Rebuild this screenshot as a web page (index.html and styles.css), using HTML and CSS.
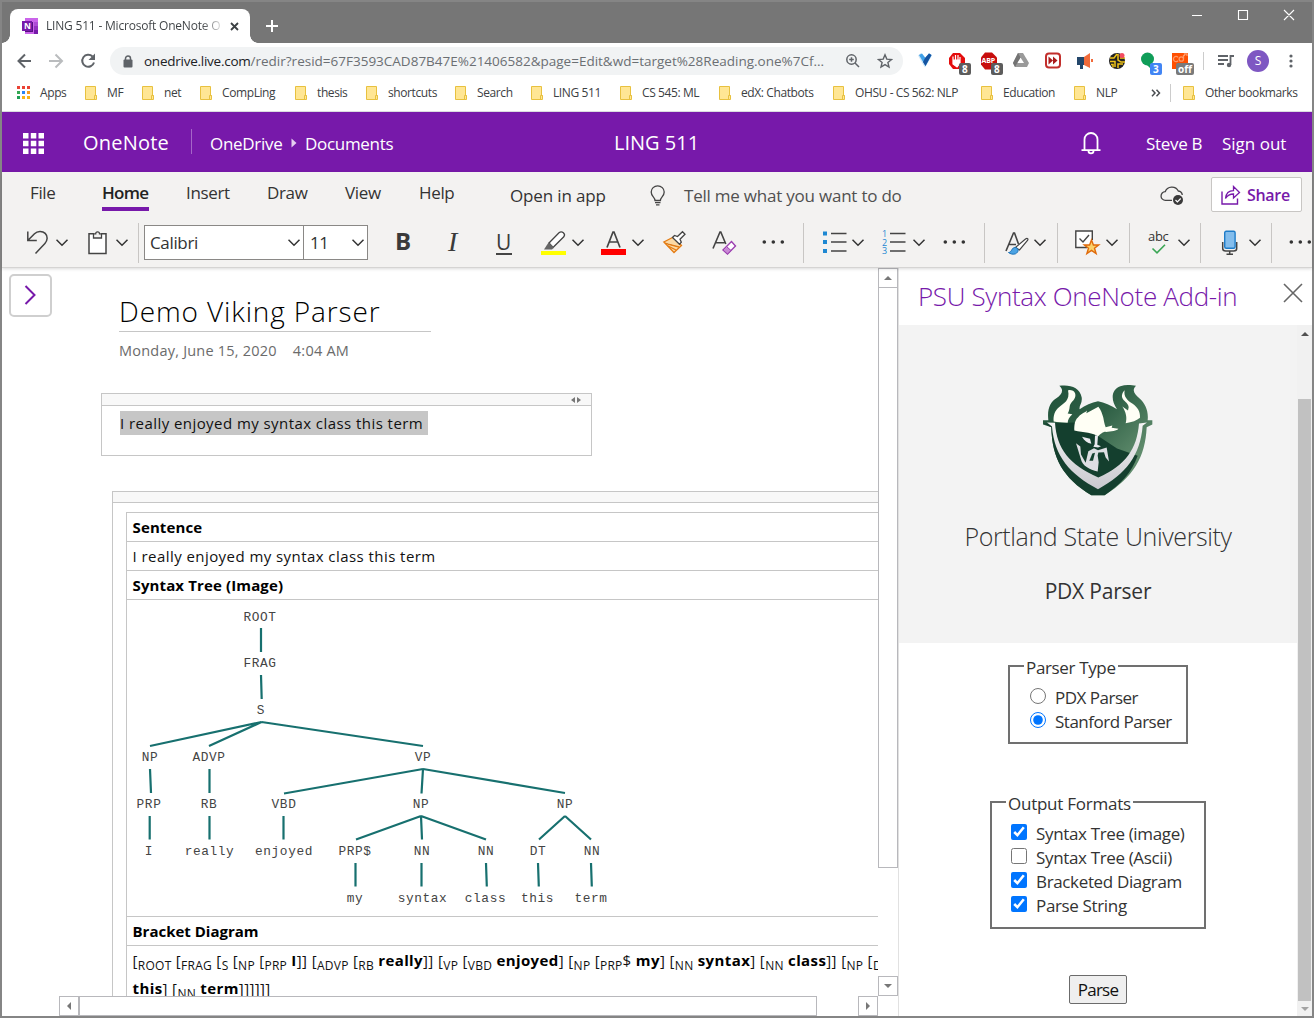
FILE: index.html
```html
<!DOCTYPE html>
<html lang="en">
<head>
<meta charset="utf-8">
<title>LING 511 - Microsoft OneNote Online</title>
<link rel="stylesheet" href="styles.css">
</head>
<body>
<svg class="defs" aria-hidden="true">
  <symbol id="folder" viewBox="0 0 12 14"><path d="M.5.5h10v9h1v4H.5z" fill="#ffe694" stroke="#e8c13f"/><path d="M9.500 13v-3.500h2" fill="none" stroke="#e8c13f"/></symbol>
  <symbol id="chev" viewBox="0 0 13 27"><path d="M.5 10.800l5.500 5.500 5.500-5.500" fill="none" stroke="#333" stroke-width="1.500"/></symbol>
  <symbol id="dots" viewBox="0 0 23 27"><g fill="#333"><circle cx="1.800" cy="13" r="1.800"/><circle cx="10.800" cy="13" r="1.800"/><circle cx="19.800" cy="13" r="1.800"/></g></symbol>
</svg>
<div class="window">
  <div class="tabstrip">
    <div class="tab">
      <svg width="16" height="16" viewBox="0 0 16 16"><path d="M3 0h13v16H3z" fill="#ca64ea"/><path d="M12 4h4v4h-4z" fill="#ae4bd5"/><path d="M12 8h4v4h-4z" fill="#9332bf"/><path d="M12 12h4v4h-4z" fill="#7719aa"/><path d="M3 4h8v10H3z" fill="#57107f"/><path d="M0 3h10v10H0z" fill="#7719aa"/><text x="2" y="11" class="logo-n">N</text></svg>
      <span class="tab-title">LING 511 - Microsoft OneNote O</span>
      <svg width="9" height="9" viewBox="0 0 9 9"><path d="M1 1l7 7M8 1l-7 7" stroke="#3c4043" stroke-width="1.800"/></svg>
    </div>
    <svg class="newtab" width="12" height="12" viewBox="0 0 12 12"><path d="M6 0v12M0 6h12" stroke="#fff" stroke-width="2"/></svg>
    <svg class="winctl" width="104" height="12" viewBox="0 0 104 12"><path d="M0 6.500h10M46.500 1.500h9v9h-9zM92 1l10 10M102 1l-10 10" fill="none" stroke="#fff" stroke-width="1.100"/></svg>
  </div>

  <div class="addressbar">
    <svg class="nav" width="84" height="18" viewBox="0 0 84 18"><path d="M14 9H2M8 2.500L1.500 9 8 15.500" fill="none" stroke="#5f6368" stroke-width="2"/><path d="M32 9h12M38.500 2.500L45 9l-6.500 6.500" fill="none" stroke="#babcbe" stroke-width="2"/><path d="M75.500 4.500A6 6 0 1 0 77 10.500" fill="none" stroke="#5f6368" stroke-width="2"/><path d="M78 1.500v6.500h-6.500z" fill="#5f6368"/></svg>
    <div class="omnibox">
      <svg width="10" height="13" viewBox="0 0 10 13"><path d="M2.500 5V3.500a2.500 2.500 0 0 1 5 0V5" fill="none" stroke="#5f6368" stroke-width="1.500"/><rect x=".5" y="4.500" width="9" height="8" rx="1" fill="#5f6368"/></svg>
      <span class="url"><b>onedrive.live.com</b>/redir?resid=67F3593CAD87B47E%21406582&amp;page=Edit&amp;wd=target%28Reading.one%7Cf...</span>
      <svg width="14" height="14" viewBox="0 0 14 14"><circle cx="5.500" cy="5.500" r="4.700" fill="none" stroke="#5f6368" stroke-width="1.500"/><path d="M9 9l4 4M3.200 5.500h4.600M5.500 3.200v4.600" stroke="#5f6368" stroke-width="1.500"/></svg>
      <svg width="16" height="16" viewBox="0 0 16 16"><path d="M8 1.800l1.800 4.300 4.700.4-3.600 3 1.100 4.600L8 11.600l-4 2.500 1.100-4.600-3.600-3 4.700-.4z" fill="none" stroke="#5f6368" stroke-width="1.400"/></svg>
    </div>
    <div class="exts">
      <svg viewBox="0 0 32 28"><path d="M9 8.500l3-2.500 4 5 4-5 3 2.500-5 9-2 3-2-3z" fill="#cfe6f7"/><path d="M10 8l3-1.500 3.500 4.500L20 6.500 22.500 8l-6 11z" fill="#3fa0e8"/><path d="M16 11l4-4.500L22.500 8l-6 11-2.500-4z" fill="#1553a0"/></svg>
      <svg viewBox="0 0 32 28"><path d="M12 6h7l5 5v6l-5 5h-7l-4-5v-6z" fill="#e40d0d"/><path d="M12 14V9.500M14.500 13V8M17 13V8M19 14v-4M12 13h7v3l-3 4-4-3z" stroke="#fff" stroke-width="1.200" fill="#fff"/><rect x="18" y="16" width="12" height="12" rx="2" fill="#5c5c5c"/><text x="21" y="26" class="badge">8</text></svg>
      <svg viewBox="0 0 32 28"><path d="M12 5.500h7l5 5v7l-5 5h-7l-4-5v-7z" fill="#c70d0d"/><text x="8.500" y="16" class="badge abp">ABP</text><rect x="18" y="16" width="12" height="12" rx="2" fill="#5c5c5c"/><text x="21" y="26" class="badge">8</text></svg>
      <svg viewBox="0 0 32 28"><path d="M13 6h5l6 10-2 4H10l-2-4z" fill="#9a9a9a"/><path d="M15.500 10.500l3.500 5.500h-7z" fill="#fff"/><path d="M8 16l5-10 2.500 4.500L10 20z" fill="#737373"/></svg>
      <svg viewBox="0 0 32 28"><rect x="9" y="6.500" width="14" height="14" rx="3" fill="#fff" stroke="#c22f2c" stroke-width="2"/><path d="M11.500 9.500l4.500 4-4.500 4zM16 9.500l4.500 4-4.500 4z" fill="#a91b1b"/></svg>
      <svg viewBox="0 0 32 28"><path d="M8 10h7v8h-1v4h-3v-4H8z" fill="#24476b"/><path d="M15 10l6-4v15l-6-3z" fill="#f26b3a"/><path d="M22 12h2v3h-2z" fill="#f26b3a"/></svg>
      <svg viewBox="0 0 32 28"><circle cx="16" cy="14" r="8" fill="#222"/><path d="M9 11h4l3-4M9 14.500h5V20M17 7v6l3 2h4M17 21v-4h5M10 17.500h2v3M19 11h5" stroke="#f0c419" stroke-width="1.500" fill="none"/><circle cx="21" cy="8.500" r="2.500" fill="#f44b61"/></svg>
      <svg viewBox="0 0 32 28"><circle cx="14.500" cy="12" r="6.500" fill="#0f9d58"/><path d="M14 18h4v4z" fill="#0f9d58"/><rect x="17" y="16" width="12" height="12" rx="2" fill="#4285f4"/><text x="20" y="26" class="badge">3</text></svg>
      <svg viewBox="0 0 32 28"><path d="M7 6h16v16H7z" fill="#ff4f00"/><g fill="none" stroke="#ff9a68" stroke-width="1.300"><path d="M13 10.300a2.600 2.600 0 1 0 0 3.400M18.500 12a2.200 2.200 0 1 0-4.400 0 2.200 2.200 0 0 0 4.400 0V8M19.500 9V7h2.500v2"/></g><rect x="11" y="16" width="18" height="12" rx="2" fill="#7a7a7a"/><text x="13" y="26" class="badge">off</text></svg>
    </div>
    <i class="vline"></i>
    <svg width="16" height="13" viewBox="0 0 16 13"><path d="M0 1h10M0 5h10M0 9h6M16 1h-3.500v9" fill="none" stroke="#5f6368" stroke-width="1.800"/><circle cx="11" cy="10" r="2.200" fill="#5f6368"/></svg>
    <span class="avatar">S</span>
    <svg width="4" height="14" viewBox="0 0 4 14"><g fill="#5f6368"><circle cx="2" cy="2" r="1.600"/><circle cx="2" cy="7" r="1.600"/><circle cx="2" cy="12" r="1.600"/></g></svg>
  </div>

  <div class="bookmarks">
    <span class="apps"><svg width="14" height="14" viewBox="0 0 14 14"><path d="M0 0h3v3H0zM5 0h3v3H5zM10 0h3v3h-3z" fill="#ea4335"/><path d="M0 5h3v3H0z" fill="#34a853"/><path d="M5 5h3v3H5z" fill="#2a85f4"/><path d="M10 5h3v3h-3z" fill="#f59a20"/><path d="M0 10h3v3H0z" fill="#1f9d55"/><path d="M5 10h3v3H5zM10 10h3v3h-3z" fill="#f9b316"/></svg>Apps</span>
    <span><svg><use href="#folder"/></svg>MF</span>
    <span><svg><use href="#folder"/></svg>net</span>
    <span><svg><use href="#folder"/></svg>CompLing</span>
    <span><svg><use href="#folder"/></svg>thesis</span>
    <span><svg><use href="#folder"/></svg>shortcuts</span>
    <span><svg><use href="#folder"/></svg>Search</span>
    <span><svg><use href="#folder"/></svg>LING 511</span>
    <span><svg><use href="#folder"/></svg>CS 545: ML</span>
    <span><svg><use href="#folder"/></svg>edX: Chatbots</span>
    <span><svg><use href="#folder"/></svg>OHSU - CS 562: NLP</span>
    <span><svg><use href="#folder"/></svg>Education</span>
    <span><svg><use href="#folder"/></svg>NLP</span>
    <span><svg class="more" viewBox="0 0 10 8"><path d="M1 .8L4 4 1 7.200M5.500.8l3 3.200-3 3.200" fill="none" stroke="#4a4d51" stroke-width="1.500"/></svg></span>
    <i class="vline"></i>
    <span><svg><use href="#folder"/></svg>Other bookmarks</span>
  </div>

  <header class="apphead">
    <svg width="21" height="21" viewBox="0 0 21 21"><path d="M0 0h5.500v5.500H0zM7.800 0h5.500v5.500H7.800zM15.500 0H21v5.500h-5.500zM0 7.800h5.500v5.500H0zM7.800 7.800h5.500v5.500H7.800zM15.500 7.800H21v5.500h-5.500zM0 15.500h5.500V21H0zM7.800 15.500h5.500V21H7.800zM15.500 15.500H21V21h-5.500z" fill="#fff"/></svg>
    <span class="brand">OneNote</span>
    <i class="divider"></i>
    <span class="crumb">OneDrive</span>
    <svg width="6" height="10" viewBox="0 0 6 10"><path d="M.5.500L5.500 5l-5 4.500z" fill="#e5cff0"/></svg>
    <span class="crumb">Documents</span>
    <span class="doc">LING 511</span>
    <svg width="20" height="24" viewBox="0 0 20 24"><path d="M3.500 19V8.500a6.500 6.500 0 0 1 13 0V19M.5 19.200h19M7.500 20a2.500 2.300 0 0 0 5 0" fill="none" stroke="#fff" stroke-width="1.800"/></svg>
    <span class="user">Steve B</span>
    <span class="user signout">Sign out</span>
  </header>

  <div class="ribbon">
    <nav class="menu">
      <span>File</span><span class="active">Home</span><span>Insert</span><span>Draw</span><span>View</span><span>Help</span>
      <span class="low">Open in app</span>
      <svg class="bulb" width="16" height="21" viewBox="0 0 16 21"><path d="M5 15.500c0-3.500-3.800-4-3.800-8.500a6.500 6.200 0 0 1 13 0c0 4.500-3.800 5-3.800 8.500zM5 17.600h5.500M6 19.800h3.500" fill="none" stroke="#444" stroke-width="1.300"/></svg>
      <span class="low tell">Tell me what you want to do</span>
      <svg class="cloud" width="25" height="21" viewBox="0 0 25 21"><path d="M12 15.300H5.500a4.300 4.300 0 0 1-.3-8.600A7 6.500 0 0 1 18.300 6a4.600 4.600 0 0 1 4 4" fill="none" stroke="#444" stroke-width="1.300"/><circle cx="18" cy="15" r="5" fill="#3a3a3a"/><path d="M15.500 15l1.900 1.900 3.300-3.400" stroke="#fff" fill="none" stroke-width="1.200"/></svg>
      <span class="share"><svg width="20" height="20" viewBox="0 0 20 20"><path d="M1 6.500V19h15.500v-5.500" fill="none" stroke="#7719aa" stroke-width="1.400"/><path d="M4.500 13.500c.5-5 3.500-7.800 8-7.800V1.500l6 6-6 5.500V9c-3.500 0-6 1.200-8 4.500z" fill="none" stroke="#7719aa" stroke-width="1.300"/></svg>Share</span>
    </nav>
    <div class="tools">
      <svg viewBox="0 0 24 27"><path d="M.8 2.500v9h9M1 11.300l6.500-6.600c3-3 8-3 10.700-.3 2.800 2.800 2.500 7-.3 10L8.500 24.500" fill="none" stroke="#444" stroke-width="1.500"/></svg>
      <svg class="chev"><use href="#chev"/></svg>
      <svg viewBox="0 0 24 27"><path d="M6 4.800H1v19.700h17V4.800h-5" fill="#fff" stroke="#444" stroke-width="1.500"/><path d="M5.500 9V4.800h2.200a1.900 1.900 0 0 1 3.800 0h2V9z" fill="#f3f2f1" stroke="#444" stroke-width="1.300"/></svg>
      <svg class="chev"><use href="#chev"/></svg>
      <i class="sep"></i>
      <div class="combo">Calibri<svg class="chev"><use href="#chev"/></svg></div>
      <div class="combo size">11<svg class="chev"><use href="#chev"/></svg></div>
      <span class="fmt bold">B</span>
      <span class="fmt ital">I</span>
      <span class="fmt under">U</span>
      <svg viewBox="0 0 26 27" class="w26"><path d="M0 22h25v4H0z" fill="#ff0"/><path d="M8 14L18 3.800c3-2.500 7 1.300 4.800 4L12 18.500z" fill="#fff" stroke="#444" stroke-width="1.300"/><path d="M3 20.500L7.500 13.500l5.500 5-2 2z" fill="#666"/></svg>
      <svg class="chev"><use href="#chev"/></svg>
      <svg viewBox="0 0 26 27" class="w26"><path d="M0 20h25v6H0z" fill="red"/><path d="M6 18.500L12 3h1l6 15.500M8.200 13h8.600" fill="none" stroke="#444" stroke-width="1.700"/></svg>
      <svg class="chev"><use href="#chev"/></svg>
      <svg viewBox="0 0 24 27"><path d="M.8 13l9.700-5 8 8.500L11 23.500z" fill="#fbd9a5" stroke="#e47b12" stroke-width="1.300"/><path d="M2 14l4 1.500 10 2.500M5 17l8 4" stroke="#e47b12" stroke-width="1.300"/><path d="M9.500 8.500l2-2 3 1 5-4.800 2.500 2.500-5 5 1.300 3-1.800 2z" fill="#fff" stroke="#444" stroke-width="1.300"/></svg>
      <svg viewBox="0 0 26 27" class="w26"><path d="M1 19.500L8 3h.8l5 12M3.500 13.800h9" fill="none" stroke="#444" stroke-width="1.600"/><path d="M11 21l8.500-8.500 4 4.500-8 8z" fill="#fff" stroke="#9b3fb0" stroke-width="1.400"/><path d="M11 21l3.500-3.500 4.500 4-3.500 3.500z" fill="#c98ad6" stroke="#9b3fb0"/></svg>
      <svg><use href="#dots"/></svg>
      <i class="sep"></i>
      <svg viewBox="0 0 24 27"><path d="M0 2.500h4v4H0zM0 11h4v4H0zM0 20h4v4H0z" fill="#1e88d2"/><path d="M8 4.500h15.500M8 13h15.500M8 22h15.500" stroke="#444" stroke-width="1.400"/></svg>
      <svg class="chev"><use href="#chev"/></svg>
      <svg viewBox="0 0 25 27" class="w25"><g class="nums"><text x="0" y="8">1</text><text x="0" y="16.500">2</text><text x="0" y="25">3</text></g><path d="M8 4.500h15.500M8 13h15.500M8 22h15.500" stroke="#444" stroke-width="1.400"/></svg>
      <svg class="chev"><use href="#chev"/></svg>
      <svg><use href="#dots"/></svg>
      <i class="sep"></i>
      <svg viewBox="0 0 24 27"><path d="M1 22L8.500 4h1l4 11M4 15.500h7" fill="none" stroke="#444" stroke-width="1.600"/><path d="M10.500 18.500L20.500 10c2-1.500 3 0 2 1.500L14.500 21z" fill="#fff" stroke="#444" stroke-width="1.200"/><path d="M3.500 23.500c3.500 0 3-5.500 7-5 3.500.8 3.500 4.500 0 6.300-2.500.9-5 .2-7-1.300z" fill="#4ba3e3" stroke="#1b72b8"/></svg>
      <svg class="chev"><use href="#chev"/></svg>
      <i class="sep"></i>
      <svg viewBox="0 0 25 27" class="w25"><path d="M12 18.500H.8V2h16.500v9" fill="#fff" stroke="#444" stroke-width="1.400"/><path d="M4.500 9.500l3.500 3.500 6-7" fill="none" stroke="#444" stroke-width="1.400"/><path d="M16.500 11l1.900 5h5.300l-4.200 3.300 1.600 5.300-4.600-3.200-4.600 3.200 1.600-5.300L9.300 16h5.300z" fill="#fbd26a" stroke="#e06a0a" stroke-width="1.400"/></svg>
      <svg class="chev"><use href="#chev"/></svg>
      <i class="sep"></i>
      <svg viewBox="0 0 24 27"><text x="0" y="12" class="abc">abc</text><path d="M4.500 19.500l4.500 4.300 8-8" fill="none" stroke="#3aa655" stroke-width="1.600"/></svg>
      <svg class="chev"><use href="#chev"/></svg>
      <i class="sep"></i>
      <svg viewBox="0 0 24 27"><path d="M2.700 13v6.500c0 2 1 2.500 3 2.500h8c2 0 3-.5 3-2.500V13M9.700 22v3M6.500 25.300h6.500" fill="none" stroke="#444" stroke-width="1.500"/><rect x="4.700" y="2.300" width="10.400" height="17" rx="1.500" fill="#83bdec" stroke="#1e7cc8" stroke-width="1.400"/></svg>
      <svg class="chev"><use href="#chev"/></svg>
      <i class="sep"></i>
      <svg><use href="#dots"/></svg>
    </div>
  </div>

  <main>
    <section class="editor">
      <div class="canvas">
        <div class="expand"><svg width="12" height="20" viewBox="0 0 12 20"><path d="M1.500 1l9 9-9 9" fill="none" stroke="#7719aa" stroke-width="2"/></svg></div>
        <h1>Demo Viking Parser</h1>
        <p class="date"><span>Monday, June 15, 2020</span><span>4:04 AM</span></p>
        <div class="note">
          <div class="grip"><svg width="10" height="6" viewBox="0 0 10 6"><path d="M4 0v6L0 3zM6 0v6l4-3z" fill="#777"/></svg></div>
          <p><mark>I really enjoyed my syntax class this term</mark></p>
        </div>
        <div class="note result">
          <div class="grip"></div>
          <div class="table">
            <div class="row"><b>Sentence</b></div>
            <div class="row">I really enjoyed my syntax class this term</div>
            <div class="row"><b>Syntax Tree (Image)</b></div>
            <svg class="tree" width="751" height="316" viewBox="127 600 751 316">
              <path d="M261 628v24M261 675l.7 24M261.500 722L150 746M261.500 722L209 746M261.500 722L423 746M150 769l1 24M209.500 769v24M423 769L284 793.500M423 769l-1.500 24.500M423 769l142 24M149.700 816v23.500M209.500 816v23.500M283.500 816v23.500M421 816l-65 23.500M421 816l1 23.500M421 816l65 23.500M565 816l-26 23.500M565 816l26 23.500M355.500 863v23.500M421.500 863v23.500M486 863l.8 23.500M538 863l.8 23.500M591 863l.8 23.500"/>
              <text x="260" y="621">ROOT</text><text x="260" y="667">FRAG</text><text x="261" y="714">S</text>
              <text x="150" y="760.500">NP</text><text x="209" y="760.500">ADVP</text><text x="423" y="760.500">VP</text>
              <text x="149" y="808">PRP</text><text x="209" y="808">RB</text><text x="284" y="808">VBD</text><text x="421" y="808">NP</text><text x="565" y="808">NP</text>
              <text x="149" y="854.500">I</text><text x="209.500" y="854.500">really</text><text x="284" y="854.500">enjoyed</text><text x="355" y="854.500">PRP$</text><text x="422" y="854.500">NN</text><text x="486" y="854.500">NN</text><text x="538" y="854.500">DT</text><text x="592" y="854.500">NN</text>
              <text x="355" y="902">my</text><text x="422.500" y="902">syntax</text><text x="485.500" y="902">class</text><text x="537.500" y="902">this</text><text x="591" y="902">term</text>
            </svg>
            <div class="row after"><b>Bracket Diagram</b></div>
            <div class="row brackets">[<sub>ROOT</sub> [<sub>FRAG</sub> [<sub>S</sub> [<sub>NP</sub> [<sub>PRP</sub> <b>I</b>]] [<sub>ADVP</sub> [<sub>RB</sub> <b>really</b>]] [<sub>VP</sub> [<sub>VBD</sub> <b>enjoyed</b>] [<sub>NP</sub> [<sub>PRP</sub>$ <b>my</b>] [<sub>NN</sub> <b>syntax</b>] [<sub>NN</sub> <b>class</b>]] [<sub>NP</sub> [<sub>DT</sub><br><b>this</b>] [<sub>NN</sub> <b>term</b>]]]]]]</div>
          </div>
        </div>
      </div>
      <div class="vscroll"><i class="btn"><svg viewBox="0 0 8 4"><path d="M0 4l4-4 4 4z"/></svg></i><i class="thumb"></i><i class="btn end"><svg viewBox="0 0 8 4"><path d="M0 0l4 4 4-4z"/></svg></i></div>
      <div class="hscroll"><i class="btn"><svg viewBox="0 0 4 8"><path d="M4 0L0 4l4 4z"/></svg></i><i class="thumb"></i><i class="btn end"><svg viewBox="0 0 4 8"><path d="M0 0l4 4-4 4z"/></svg></i></div>
    </section>

    <aside>
      <div class="panehead"><h2>PSU Syntax OneNote Add-in</h2><svg width="20" height="20" viewBox="0 0 20 20"><path d="M1 1l18 18M19 1L1 19" stroke="#666" stroke-width="1.600"/></svg></div>
      <div class="panebody">
        <div class="panecontent">
          <div class="hero">
            <svg width="110" height="111" viewBox="70 45 330 332">
              <defs><linearGradient id="g" x1="0" y1="0" x2="1" y2="1"><stop offset="0" stop-color="#1f5139"/><stop offset=".4" stop-color="#2f6046"/><stop offset=".75" stop-color="#5f8b6c"/></linearGradient>
              <linearGradient id="w" x1="0" y1="0" x2="0" y2="1"><stop offset="0" stop-color="#f4f4f4"/><stop offset="1" stop-color="#c9c9cf"/></linearGradient></defs>
              <path d="M119 47c30-5 62 4 67 34 3 18-9 28-6 36 17-12 35-20 55-24 20 4 38 12 57 24-20-28-17-60 10-69 16-5 34-3 47-1-14 14-4 25 10 37 18 16 28 38 25 66h14v13l-17 8c-4 90-40 150-126 204h-40C129 323 97 262 95 171l-25-8v-13h16c-4-35 6-55 24-66 18-12 23-25 9-37z" fill="url(#g)"/>
              <path d="M72 160l90-3 70 38 60 40 62 22c-17 50-53 88-99 118h-40C129 323 97 262 95 171z" fill="#143f2e"/>
              <path d="M147 60c13-2 22 7 20 18-2 13-17 19-17 32-1 8-2 14-6 20l14 2c-10 9-13 16-14 26-16-1-31-2-42-4-2-19 4-33 16-43 14-12 34-20 27-51z" fill="#fffff5"/>
              <path d="M315 60c-8 8-11 18-5 27 6 8 16 12 17 24l-2 10-17-12c11 17 15 34 10 50 19-2 34-8 43-16 1-20-8-32-22-42-16-11-28-22-24-41z" fill="#fffff5"/>
              <path d="M236 110c8 10 12 22 15 33 2 10 3 19 7 28l20-5-2 7 20 3c-3 6-28 10-41 9-8 3-15 8-20 14-12-11-44-12-71-18-1-18 3-32 10-38 8-10 16-14 24-18l4-4-2 8z" fill="#fffff5"/>
              <path d="M187 200l24 6 4 15c-12-2-21-8-28-21zM226 196h9l-2 28 11 4-9 4-14-2 4-8z" fill="#e9e9ee"/>
              <path d="M169 219l13 10 2 24 14 25 8-35 17-9 12 6 26-8 7 42-10-12-5-16-17 1-2 9 3 20-3 28c-24-4-47-19-50-36z" fill="#dedee3"/>
              <path d="M209 272l9-22 8-2-6 24z" fill="#143f2e"/>
              <path d="M82 157l24 1c5 78 44 127 130 164 82-36 116-86 122-162l24-3-13 10c-7 88-50 146-134 190C151 313 104 258 97 169z" fill="url(#w)"/>
            </svg>
            <p class="uni">Portland State University</p>
            <p class="app">PDX Parser</p>
          </div>
          <fieldset class="type">
            <legend>Parser Type</legend>
            <label><input type="radio" name="p">PDX Parser</label>
            <label><input type="radio" name="p" checked>Stanford Parser</label>
          </fieldset>
          <fieldset class="formats">
            <legend>Output Formats</legend>
            <label><input type="checkbox" checked>Syntax Tree (image)</label>
            <label><input type="checkbox">Syntax Tree (Ascii)</label>
            <label><input type="checkbox" checked>Bracketed Diagram</label>
            <label><input type="checkbox" checked>Parse String</label>
          </fieldset>
          <button>Parse</button>
        </div>
        <div class="panescroll"><svg viewBox="0 0 8 4"><path d="M0 4l4-4 4 4z" fill="#505050"/></svg><i></i><svg viewBox="0 0 8 4"><path d="M0 0l4 4 4-4z" fill="#a3a3a3"/></svg></div>
      </div>
    </aside>
  </main>
</div>
</body>
</html>
```
FILE: styles.css
```css
* { box-sizing: border-box; }
body { margin: 0; font-family: "Open Sans", "Noto Sans", sans-serif; color: #333; overflow: hidden; }
h1, h2, p { margin: 0; font-weight: 400; }
svg { display: block; flex: none; }
.defs { position: absolute; width: 0; height: 0; }
.window { width: 1314px; height: 1018px; border: 2px solid #858585; display: flex; flex-direction: column; background: #fff; white-space: nowrap; }

/* browser chrome */
.tabstrip { height: 41px; flex: none; background: #767676; display: flex; align-items: flex-end; padding-left: 8px; }
.tab { width: 240px; height: 34px; background: #fff; border-radius: 8px 8px 0 0; display: flex; align-items: center; padding-left: 12px; position: relative; }
.tab::before, .tab::after { content: ""; position: absolute; bottom: 0; width: 8px; height: 8px; }
.tab::before { left: -8px; background: radial-gradient(circle at 0 0, #767676 7.5px, #fff 8px); }
.tab::after { right: -8px; background: radial-gradient(circle at 100% 0, #767676 7.5px, #fff 8px); }
.logo-n { font: bold 8.500px "Open Sans", sans-serif; fill: #fff; }
.tab-title { width: 175px; margin: 0 9px 2px 8px; font-size: 12px; letter-spacing: -.2px; overflow: hidden; background: linear-gradient(90deg, #3c4043 155px, #ddd 175px); -webkit-background-clip: text; color: transparent; }
.newtab { margin: 0 0 11px 16px; }
.winctl { margin: 0 0 22px 914px; }
.addressbar { height: 36px; flex: none; display: flex; align-items: center; padding-left: 15px; }
.nav { margin-right: 9px; }
.omnibox { width: 793px; height: 28px; border-radius: 14px; background: #f1f3f4; display: flex; align-items: center; padding-left: 13px; }
.url { width: 692px; margin: 0 10px 0 11px; font-size: 13.500px; color: #6b6f73; }
.url b { font-weight: 400; color: #202124; letter-spacing: -.25px; }
.omnibox svg:last-child { margin-left: 17px; }
.exts { display: flex; margin-left: 6px; }
.exts svg { width: 32px; height: 28px; }
.badge { font: bold 10px "Open Sans", sans-serif; fill: #fff; }
.badge.abp { font-size: 7px; letter-spacing: -.2px; }
.vline { width: 1px; height: 18px; background: #ccc; }
.exts + .vline { margin: 0 14px 0 6px; }
.avatar { width: 22px; height: 22px; margin: 0 20px 0 13px; border-radius: 50%; background: #7e57c2; color: #fff; font-size: 12px; line-height: 22px; text-align: center; }
.bookmarks { height: 33px; flex: none; border-bottom: 1px solid #dadce0; display: grid; align-items: center; padding: 0 0 4px 15px; grid-template-columns: 68px 57px 58px 95px 71px 89px 76px 89px 99px 114px 148px 93px 77px 19px 13px auto; font-size: 12px; letter-spacing: -.4px; color: #3c4043; }
.bookmarks span { display: flex; align-items: center; line-height: 18px; }
.bookmarks span svg { width: 12px; height: 14px; margin-right: 10px; }
.bookmarks .apps svg { width: 14px; margin-right: 9px; }
.bookmarks .more { width: 10px; height: 8px; }

/* application header */
.apphead { height: 60px; flex: none; background: #7719aa; color: #fff; display: grid; align-items: center; padding: 2px 0 0 21px; grid-template-columns: 60px 108px 19px 81px 14px 309px 467px 65px 76px auto; }
.brand, .doc { font-size: 20px; letter-spacing: .2px; margin-bottom: 2px; }
.doc { letter-spacing: 0; }
.divider { width: 1px; height: 25px; background: #a566c8; margin-bottom: 4px; }
.crumb, .user { font-size: 17px; letter-spacing: -.3px; }
.signout { letter-spacing: 0; }

/* ribbon */
.ribbon { height: 96px; flex: none; background: #f3f2f1; border-bottom: 1px solid #d5d4d3; box-shadow: 0 1px 3px rgba(0,0,0,.15); z-index: 1; }
.menu { height: 46px; display: grid; align-items: start; padding-left: 28px; grid-template-columns: 72px 84px 81px 78px 74px 91px 140px 34px 476px 51px auto; font-size: 17px; letter-spacing: -.35px; line-height: 24px; }
.menu > span { margin-top: 9px; }
.menu .active { width: 47px; font-weight: 600; letter-spacing: -.7px; border-bottom: 4px solid #7719aa; padding-bottom: 2px; color: #222; }
.menu .low { margin-top: 12px; letter-spacing: -.15px; }
.menu .tell { letter-spacing: -.22px; color: #505050; }
.bulb, .cloud { margin-top: 13px; }
.menu .share { width: 91px; height: 35px; margin-top: 5px; background: #fff; border: 1px solid #c8c6c4; border-radius: 2px; color: #7719aa; font-size: 16px; font-weight: 600; letter-spacing: -.3px; display: flex; align-items: center; gap: 6px; padding-left: 9px; }
.tools { height: 49px; display: grid; align-items: center; padding-left: 25px; overflow: hidden; grid-template-columns: 29px 32px 28px 22px 6px 160px 91px 52px 49px 45px 31px 29px 31px 31px 49px 50px 41px 20px 29px 30px 31px 30px 41px 21px 29px 23px 18px 31px 23px 19px 30px 22px 20px 29px 22px 18px 23px; }
.tools > svg { width: 24px; height: 27px; overflow: visible; }
.tools > svg.w26 { width: 26px; }
.tools > svg.w25 { width: 25px; }
.tools svg.chev { width: 13px; height: 27px; }
.sep { width: 1px; height: 40px; background: #c8c6c4; }
.combo { width: 160px; height: 35px; background: #fff; border: 1px solid #8a8886; display: flex; align-items: center; justify-content: space-between; padding: 0 2px 0 5px; font-size: 17px; letter-spacing: -.35px; }
.combo.size { width: 64px; padding-left: 6px; border-left: 0; }
.fmt { font-size: 24px; line-height: 30px; color: #3a3a3a; margin-bottom: 3px; }
.bold { font-weight: 700; }
.ital { font-family: "Liberation Serif", serif; font-style: italic; font-size: 28px; margin: 0 0 1px 1px; }
.under { font-size: 21px; line-height: 22px; width: 16px; border-bottom: 2px solid #444; height: 24px; margin: 0; }
.nums { font: 9px "Open Sans", sans-serif; fill: #1e88d2; }
.abc { font: 13px "Open Sans", sans-serif; letter-spacing: -.3px; fill: #333; }

/* notebook page */
main { flex: 1; min-height: 0; display: flex; }
.editor { width: 897px; border-right: 1px solid #e1e1e1; display: grid; grid-template: 728px 20px / 876px 20px; }
.canvas { overflow: hidden; color: #111; font-size: 15px; letter-spacing: .44px; }
.expand { width: 43px; height: 43px; margin: 6px 0 0 7px; border: 2px solid #cfcfcf; border-radius: 5px; display: flex; align-items: center; padding: 0 0 2px 13px; }
h1 { width: 312px; height: 44px; margin: -29px 0 0 117px; border-bottom: 1px solid #c6c6c6; font-size: 28px; font-weight: 300; letter-spacing: .88px; line-height: 46px; color: #000; }
.date { margin: 9px 0 0 117px; display: flex; gap: 16px; font-size: 14.500px; line-height: 20px; letter-spacing: .22px; color: #6b6b6b; }
.note { width: 491px; height: 63px; margin: 32px 0 0 99px; border: 1px solid #c6c6c6; }
.grip { height: 12px; background: #f8f8f8; border-bottom: 1px solid #c6c6c6; display: flex; align-items: center; justify-content: flex-end; padding-right: 10px; }
.note p { margin: 5px 0 0 18px; }
mark { display: inline-block; width: 308px; height: 24px; line-height: 25px; background: #c6c6c6; color: inherit; }
.note.result { width: 900px; height: 600px; margin: 35px 0 0 110px; }
.result .grip { height: 11px; }
.table { margin: 9px 0 0 13px; border: 1px solid #c6c6c6; }
.row { height: 29px; line-height: 28px; padding-left: 5.500px; border-bottom: 1px solid #c6c6c6; }
.row b { letter-spacing: .13px; color: #000; }
.row.after { height: 30px; border-top: 1px solid #c6c6c6; }
.row.after b { letter-spacing: 0; }
.brackets { height: auto; line-height: 28px; letter-spacing: .4px; }
.brackets b { letter-spacing: .4px; }
sub { font-size: 12px; line-height: 0; vertical-align: -4px; letter-spacing: .25px; }
.tree path { fill: none; stroke: #17706f; stroke-width: 2.200; }
.tree text { font: 12.800px "Liberation Mono", monospace; letter-spacing: .6px; text-anchor: middle; fill: #444; }
.btn, .thumb { display: block; background: #fff; border: 1px solid #b8b8bc; }
.btn { display: flex; align-items: center; justify-content: center; width: 20px; height: 20px; fill: #777; }
.vscroll .btn svg { width: 8px; height: 4px; }
.hscroll .btn svg { width: 4px; height: 8px; }
.vscroll { display: flex; flex-direction: column; }
.vscroll .thumb { height: 581px; margin-top: -1px; }
.vscroll .end { margin-top: auto; }
.hscroll { display: flex; padding-left: 57px; }
.hscroll .thumb { width: 738px; }
.hscroll .end { margin-left: auto; }

/* add-in pane */
aside { flex: 1; display: flex; flex-direction: column; }
.panehead { height: 57px; display: flex; justify-content: space-between; align-items: center; padding: 0 9px 0 19px; }
.panehead svg { margin-bottom: 7px; }
h2 { margin-bottom: 2px; font-size: 26px; font-weight: 300; letter-spacing: -.34px; color: #7719aa; }
.panebody { flex: 1; display: flex; }
.panecontent { width: 398px; display: flex; flex-direction: column; align-items: center; }
.hero { width: 398px; height: 318px; background: #f3f3f3; display: flex; flex-direction: column; align-items: center; padding-top: 60px; }
.uni { margin-top: 22px; font-size: 25px; font-weight: 300; letter-spacing: -.38px; line-height: 36px; }
.app { margin-top: 22px; font-size: 21px; letter-spacing: -.2px; line-height: 30px; }
fieldset { margin: 11px 0 0; padding: 0 0 0 20px; border: 2px solid #707070; font-size: 17px; letter-spacing: -.5px; line-height: 24px; }
legend { height: 24px; margin-left: -6px; padding: 0 2px; line-height: 28px; letter-spacing: -.35px; }
.type { width: 180px; height: 90px; }
.formats { width: 216px; height: 139px; margin-top: 46px; padding-left: 19px; letter-spacing: -.35px; }
.formats legend { margin-left: -5px; letter-spacing: -.25px; }
label { display: flex; align-items: center; gap: 9px; height: 24px; position: relative; top: 8px; }
label:nth-of-type(4) { height: 23px; }
input { width: 16px; height: 16px; margin: 0 0 4px; accent-color: #0075ff; }
button { width: 58px; height: 29px; margin-top: 46px; padding: 0; border: 1px solid #6b6b6b; border-radius: 2px; background: #efefef; font: 17px "Open Sans", sans-serif; letter-spacing: -.75px; color: #111; }
.panescroll { width: 15px; background: #f1f1f1; display: flex; flex-direction: column; align-items: center; padding: 7px 0 5px; }
.panescroll i { width: 13px; flex: 1; margin: 63px 0 6px; background: #c1c1c1; }
.panescroll svg { width: 8px; height: 4px; }
```
